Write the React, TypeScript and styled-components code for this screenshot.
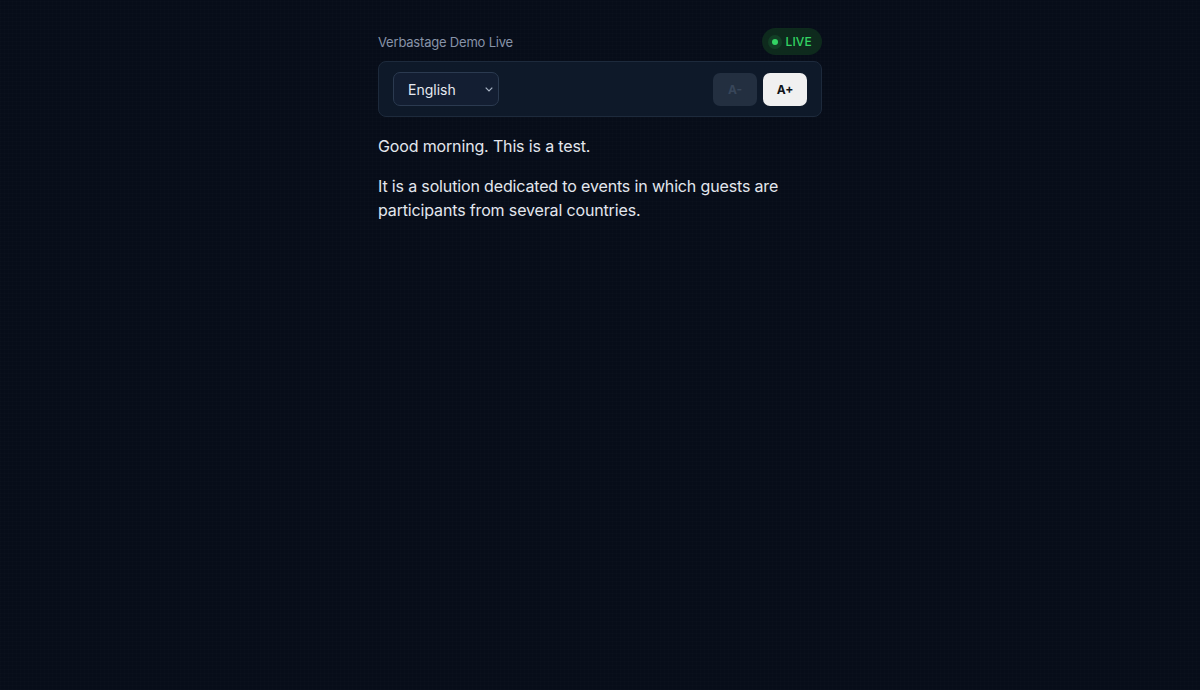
import React, { useState } from 'react';
import styled, { createGlobalStyle } from 'styled-components';

const GlobalStyle = createGlobalStyle`
  html, body {
    margin: 0;
    padding: 0;
    min-height: 100%;
  }
  body {
    background-color: #070d19;
    background-image:
      repeating-linear-gradient(0deg, rgba(255, 255, 255, 0.008) 0 1px, transparent 1px 4px),
      repeating-linear-gradient(90deg, rgba(255, 255, 255, 0.008) 0 1px, transparent 1px 4px);
    font-family: Inter, 'Noto Sans', sans-serif;
    color: #e5e9f0;
  }
`;

const Page = styled.div`
  min-height: 690px;
  display: flex;
  justify-content: center;
  padding-top: 28px;
  box-sizing: border-box;
`;

const Column = styled.main`
  width: 444px;
  display: flex;
  flex-direction: column;
`;

const Header = styled.header`
  display: flex;
  align-items: center;
  justify-content: space-between;
  height: 27px;
  margin-bottom: 6px;
`;

const Title = styled.span`
  font-size: 13px;
  color: #8793a8;
  letter-spacing: -0.2px;
`;

const LiveBadge = styled.span`
  display: inline-flex;
  align-items: center;
  gap: 7px;
  height: 27px;
  padding: 0 10px 0 10px;
  border-radius: 14px;
  background: #0e2a1d;
  color: #33d464;
  font-size: 12px;
  font-weight: 500;
  letter-spacing: 0.2px;
  box-sizing: border-box;
`;

const Dot = styled.span`
  width: 6px;
  height: 6px;
  border-radius: 50%;
  background: #33d464;
  box-shadow: 0 0 0 4px rgba(51, 212, 100, 0.12);
`;

const Toolbar = styled.div`
  display: flex;
  align-items: center;
  justify-content: space-between;
  height: 56px;
  padding: 0 14px;
  background: #0e1929;
  border: 1px solid #1d2a3c;
  border-radius: 8px;
  box-sizing: border-box;
`;

const Select = styled.select`
  width: 106px;
  height: 34px;
  padding: 0 10px 0 14px;
  background: #131e32;
  color: #e5e9f0;
  border: 1px solid #2b3a50;
  border-radius: 7px;
  font-family: inherit;
  font-size: 14px;
  appearance: none;
  background-image: url("data:image/svg+xml,%3Csvg xmlns='http://www.w3.org/2000/svg' width='8' height='5' viewBox='0 0 8 5'%3E%3Cpath d='M0.7 0.7l3.3 3.3 3.3-3.3' fill='none' stroke='%23a8b3c4' stroke-width='1.2'/%3E%3C/svg%3E");
  background-repeat: no-repeat;
  background-position: right 5px center;
  outline: none;
`;

const SizeButtons = styled.div`
  display: flex;
  gap: 6px;
`;

const SizeButton = styled.button<{ $disabled?: boolean }>`
  width: 44px;
  height: 33px;
  border: none;
  border-radius: 7px;
  font-family: inherit;
  font-size: 12px;
  font-weight: 700;
  background: ${(p) => (p.$disabled ? '#232f40' : '#f0f0f0')};
  color: ${(p) => (p.$disabled ? '#38465a' : '#111418')};
  cursor: ${(p) => (p.$disabled ? 'default' : 'pointer')};
`;

const Transcript = styled.section`
  padding-top: 17px;
`;

const Line = styled.p`
  margin: 0 0 16px;
  font-size: 16px;
  line-height: 24px;
  color: #e3e7ee;
  letter-spacing: -0.15px;
`;

const lines = [
  'Good morning. This is a test.',
  'It is a solution dedicated to events in which guests are participants from several countries.',
];

export default function App() {
  const [lang, setLang] = useState('en');
  return (
    <>
      <GlobalStyle />
      <Page>
        <Column>
          <Header>
            <Title>Verbastage Demo Live</Title>
            <LiveBadge>
              <Dot />
              LIVE
            </LiveBadge>
          </Header>
          <Toolbar>
            <Select value={lang} onChange={(e) => setLang(e.target.value)}>
              <option value="en">English</option>
              <option value="it">Italiano</option>
              <option value="fr">Français</option>
            </Select>
            <SizeButtons>
              <SizeButton $disabled>A-</SizeButton>
              <SizeButton>A+</SizeButton>
            </SizeButtons>
          </Toolbar>
          <Transcript>
            {lines.map((l) => (
              <Line key={l}>{l}</Line>
            ))}
          </Transcript>
        </Column>
      </Page>
    </>
  );
}
